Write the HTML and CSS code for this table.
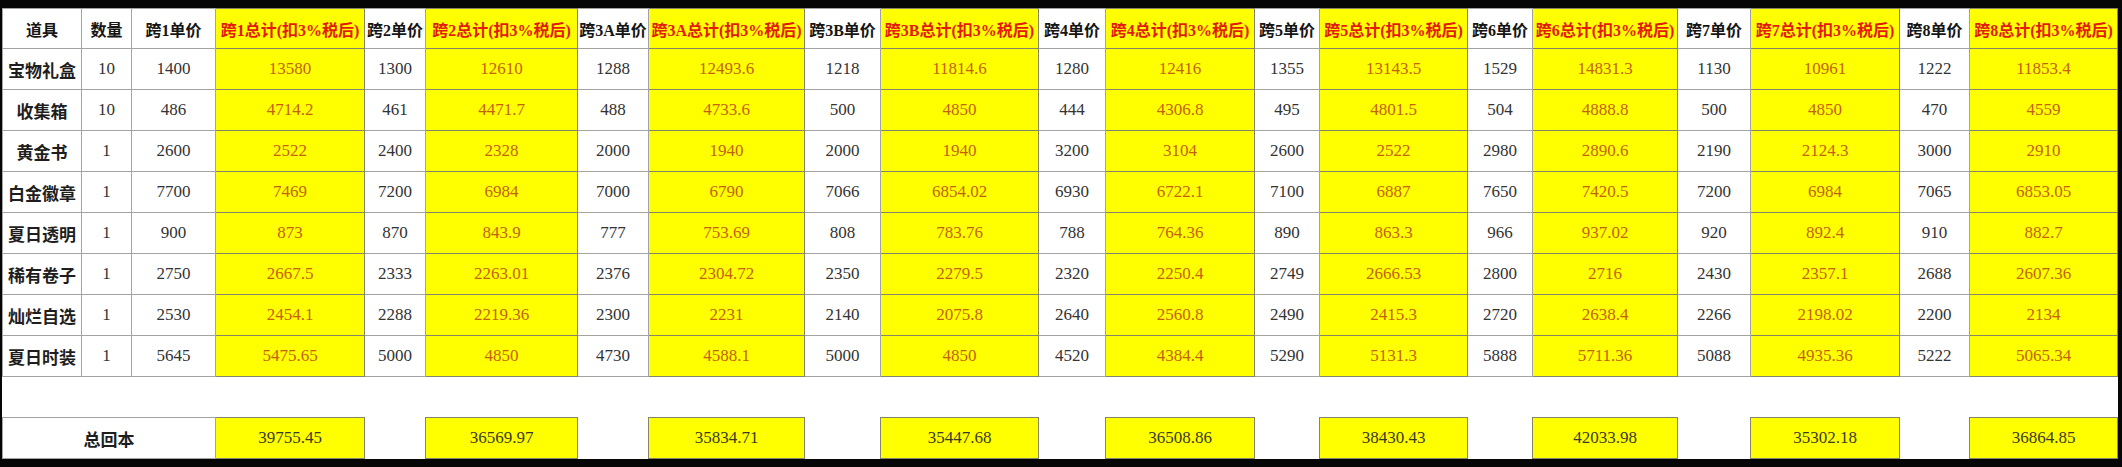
FILE: index.html
```html
<!DOCTYPE html>
<html lang="zh-CN">
<head>
<meta charset="utf-8">
<title>跨服回本表</title>
<link rel="stylesheet" href="styles.css">
</head>
<body>
<div class="sheet">
<table class="grid">
<colgroup>
<col class="w-name"><col class="w-qty">
<col class="w-p1"><col class="w-t1">
<col class="w-p2"><col class="w-t2">
<col class="w-p3a"><col class="w-t3a">
<col class="w-p3b"><col class="w-t3b">
<col class="w-p4"><col class="w-t4">
<col class="w-p5"><col class="w-t5">
<col class="w-p6"><col class="w-t6">
<col class="w-p7"><col class="w-t7">
<col class="w-p8"><col class="w-t8">
</colgroup>
<thead>
<tr class="head">
<th>道具</th><th>数量</th>
<th>跨1单价</th><th class="hl">跨1总计(扣3%税后)</th>
<th>跨2单价</th><th class="hl">跨2总计(扣3%税后)</th>
<th>跨3A单价</th><th class="hl">跨3A总计(扣3%税后)</th>
<th>跨3B单价</th><th class="hl">跨3B总计(扣3%税后)</th>
<th>跨4单价</th><th class="hl">跨4总计(扣3%税后)</th>
<th>跨5单价</th><th class="hl">跨5总计(扣3%税后)</th>
<th>跨6单价</th><th class="hl">跨6总计(扣3%税后)</th>
<th>跨7单价</th><th class="hl">跨7总计(扣3%税后)</th>
<th>跨8单价</th><th class="hl">跨8总计(扣3%税后)</th>
</tr>
</thead>
<tbody>
<tr class="row">
<td class="name">宝物礼盒</td><td>10</td>
<td>1400</td><td class="hl">13580</td>
<td>1300</td><td class="hl">12610</td>
<td>1288</td><td class="hl">12493.6</td>
<td>1218</td><td class="hl">11814.6</td>
<td>1280</td><td class="hl">12416</td>
<td>1355</td><td class="hl">13143.5</td>
<td>1529</td><td class="hl">14831.3</td>
<td>1130</td><td class="hl">10961</td>
<td>1222</td><td class="hl">11853.4</td>
</tr>
<tr class="row">
<td class="name">收集箱</td><td>10</td>
<td>486</td><td class="hl">4714.2</td>
<td>461</td><td class="hl">4471.7</td>
<td>488</td><td class="hl">4733.6</td>
<td>500</td><td class="hl">4850</td>
<td>444</td><td class="hl">4306.8</td>
<td>495</td><td class="hl">4801.5</td>
<td>504</td><td class="hl">4888.8</td>
<td>500</td><td class="hl">4850</td>
<td>470</td><td class="hl">4559</td>
</tr>
<tr class="row">
<td class="name">黄金书</td><td>1</td>
<td>2600</td><td class="hl">2522</td>
<td>2400</td><td class="hl">2328</td>
<td>2000</td><td class="hl">1940</td>
<td>2000</td><td class="hl">1940</td>
<td>3200</td><td class="hl">3104</td>
<td>2600</td><td class="hl">2522</td>
<td>2980</td><td class="hl">2890.6</td>
<td>2190</td><td class="hl">2124.3</td>
<td>3000</td><td class="hl">2910</td>
</tr>
<tr class="row">
<td class="name">白金徽章</td><td>1</td>
<td>7700</td><td class="hl">7469</td>
<td>7200</td><td class="hl">6984</td>
<td>7000</td><td class="hl">6790</td>
<td>7066</td><td class="hl">6854.02</td>
<td>6930</td><td class="hl">6722.1</td>
<td>7100</td><td class="hl">6887</td>
<td>7650</td><td class="hl">7420.5</td>
<td>7200</td><td class="hl">6984</td>
<td>7065</td><td class="hl">6853.05</td>
</tr>
<tr class="row">
<td class="name">夏日透明</td><td>1</td>
<td>900</td><td class="hl">873</td>
<td>870</td><td class="hl">843.9</td>
<td>777</td><td class="hl">753.69</td>
<td>808</td><td class="hl">783.76</td>
<td>788</td><td class="hl">764.36</td>
<td>890</td><td class="hl">863.3</td>
<td>966</td><td class="hl">937.02</td>
<td>920</td><td class="hl">892.4</td>
<td>910</td><td class="hl">882.7</td>
</tr>
<tr class="row">
<td class="name">稀有卷子</td><td>1</td>
<td>2750</td><td class="hl">2667.5</td>
<td>2333</td><td class="hl">2263.01</td>
<td>2376</td><td class="hl">2304.72</td>
<td>2350</td><td class="hl">2279.5</td>
<td>2320</td><td class="hl">2250.4</td>
<td>2749</td><td class="hl">2666.53</td>
<td>2800</td><td class="hl">2716</td>
<td>2430</td><td class="hl">2357.1</td>
<td>2688</td><td class="hl">2607.36</td>
</tr>
<tr class="row">
<td class="name">灿烂自选</td><td>1</td>
<td>2530</td><td class="hl">2454.1</td>
<td>2288</td><td class="hl">2219.36</td>
<td>2300</td><td class="hl">2231</td>
<td>2140</td><td class="hl">2075.8</td>
<td>2640</td><td class="hl">2560.8</td>
<td>2490</td><td class="hl">2415.3</td>
<td>2720</td><td class="hl">2638.4</td>
<td>2266</td><td class="hl">2198.02</td>
<td>2200</td><td class="hl">2134</td>
</tr>
<tr class="row">
<td class="name">夏日时装</td><td>1</td>
<td>5645</td><td class="hl">5475.65</td>
<td>5000</td><td class="hl">4850</td>
<td>4730</td><td class="hl">4588.1</td>
<td>5000</td><td class="hl">4850</td>
<td>4520</td><td class="hl">4384.4</td>
<td>5290</td><td class="hl">5131.3</td>
<td>5888</td><td class="hl">5711.36</td>
<td>5088</td><td class="hl">4935.36</td>
<td>5222</td><td class="hl">5065.34</td>
</tr>
<tr class="blank">
<td colspan="20"></td>
</tr>
<tr class="total">
<td class="label" colspan="3">总回本</td><td class="sum">39755.45</td>
<td class="gap"></td><td class="sum">36569.97</td>
<td class="gap"></td><td class="sum">35834.71</td>
<td class="gap"></td><td class="sum">35447.68</td>
<td class="gap"></td><td class="sum">36508.86</td>
<td class="gap"></td><td class="sum">38430.43</td>
<td class="gap"></td><td class="sum">42033.98</td>
<td class="gap"></td><td class="sum">35302.18</td>
<td class="gap"></td><td class="sum">36864.85</td>
</tr>
</tbody>
</table>
</div>
</body>
</html>
```
FILE: styles.css
```css
html, body {
  margin: 0;
  padding: 0;
  background: #060606;
}

.sheet {
  padding: 8px 0 0 2px;
}

.grid {
  border-collapse: collapse;
  table-layout: fixed;
  width: 2115px;
  background: #ffffff;
  font-family: "Liberation Serif", "Noto Sans CJK SC", serif;
  font-size: 17px;
  color: #333333;
}

.w-name { width: 79px; }
.w-qty { width: 50px; }
.w-p1 { width: 84px; }
.w-t1 { width: 149px; }
.w-p2 { width: 61px; }
.w-t2 { width: 152px; }
.w-p3a { width: 71px; }
.w-t3a { width: 156px; }
.w-p3b { width: 76px; }
.w-t3b { width: 158px; }
.w-p4 { width: 67px; }
.w-t4 { width: 149px; }
.w-p5 { width: 65px; }
.w-t5 { width: 148px; }
.w-p6 { width: 65px; }
.w-t6 { width: 145px; }
.w-p7 { width: 73px; }
.w-t7 { width: 149px; }
.w-p8 { width: 70px; }
.w-t8 { width: 148px; }

.grid th,
.grid td {
  padding: 0;
  text-align: center;
  vertical-align: middle;
  white-space: nowrap;
  overflow: hidden;
  border: 1px solid #a3a3a3;
}

.head {
  height: 40px;
}

.head th {
  font-weight: bold;
  color: #151515;
  font-size: 16px;
}

.head th.hl {
  background: #ffff00;
  color: #e31a0c;
  border-color: #85856a;
}

.row {
  height: 41px;
}

.row td.name {
  font-weight: bold;
  color: #1e1e1e;
}

.row td.hl {
  background: #ffff00;
  color: #c4620e;
  border-color: #85856a;
}

.blank {
  height: 41px;
}

.blank td {
  border-left: none;
  border-right: none;
  border-bottom: none;
}

.total {
  height: 41px;
}

.total td.gap {
  border: none;
}

.total td.label {
  font-weight: bold;
  color: #1e1e1e;
}

.total td.sum {
  background: #ffff00;
  color: #3a3a2a;
  border-color: #85856a;
}
```
